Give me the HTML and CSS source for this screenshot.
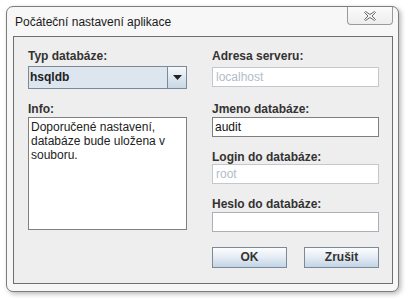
FILE: index.html
```html
<!DOCTYPE html>
<html>
<head>
<meta charset="utf-8">
<link rel="stylesheet" href="styles.css">
</head>
<body>
<div class="window">
  <div class="titlebar">
    <span class="title">Počáteční nastavení aplikace</span>
    <span class="close">
      <svg width="12" height="10" viewBox="0 0 12 10"><path d="M0.5 1.5 L1.5 0.5 L6 3.5 L10.5 0.5 L11.5 1.5 L8 5 L11.5 8.5 L10.5 9.5 L6 6.5 L1.5 9.5 L0.5 8.5 L4 5 Z" fill="#f4f4f4" stroke="#6c6c6c" stroke-width="1" stroke-linejoin="round"/></svg>
    </span>
  </div>
  <div class="panel">
    <div class="col left">
      <div class="label">Typ databáze:</div>
      <div class="combo mt3">
        <span class="combo-value">hsqldb</span>
        <span class="combo-arrow"><svg width="9" height="5" viewBox="0 0 9 5"><path d="M0 0 H9 L4.5 5 Z" fill="#222"/></svg></span>
      </div>
      <div class="label mt13">Info:</div>
      <div class="textarea mt1">Doporučené nastavení,<br>databáze bude uložena v<br>souboru.</div>
    </div>
    <div class="col right">
      <div class="label">Adresa serveru:</div>
      <div class="field disabled mt4">localhost</div>
      <div class="label mt15">Jmeno databáze:</div>
      <div class="field mt1">audit</div>
      <div class="label mt13">Login do databáze:</div>
      <div class="field disabled">root</div>
      <div class="label mt13">Heslo do databáze:</div>
      <div class="field plain mt1"></div>
      <div class="buttons">
        <div class="btn">OK</div>
        <div class="btn">Zrušit</div>
      </div>
    </div>
  </div>
</div>
</body>
</html>
```

FILE: styles.css
```css
html, body {
  margin: 0;
  padding: 0;
  background: #ffffff;
}
body {
  font-family: "Liberation Sans", Arial, sans-serif;
  font-size: 12px;
  width: 408px;
  height: 299px;
  overflow: hidden;
}
.window {
  margin: 6px 0 0 6px;
  width: 393px;
  height: 286px;
  box-sizing: border-box;
  border: 1px solid #7c7c7c;
  border-radius: 7px;
  background: #f7f7f7;
  box-shadow: 2px 2px 5px rgba(0, 0, 0, 0.28);
  padding: 0 5px 7px 6px;
  display: flex;
  flex-direction: column;
}
.titlebar {
  height: 29px;
  display: flex;
  justify-content: space-between;
  align-items: flex-start;
}
.title {
  margin: 8px 0 0 2px;
  line-height: 14px;
  color: #1a1a1a;
}
.close {
  width: 46px;
  height: 18px;
  box-sizing: border-box;
  border: 1px solid #9a9a9a;
  border-top: none;
  border-radius: 0 0 4px 4px;
  background: linear-gradient(#fbfbfb, #ededed);
  display: flex;
  align-items: center;
  justify-content: center;
  padding-top: 1px;
}
.close svg { display: block; }
.panel {
  flex: 1;
  border: 1px solid #6e6e6e;
  background: #eeeeee;
  display: grid;
  grid-template-columns: 159px 167px;
  column-gap: 25px;
  padding: 12px 0 0 14px;
  align-content: start;
}
.col {
  display: flex;
  flex-direction: column;
}
.label {
  font-weight: bold;
  line-height: 14px;
  height: 14px;
  color: #333333;
}
.mt1 { margin-top: 1px; }
.mt3 { margin-top: 3px; }
.mt4 { margin-top: 4px; }
.mt13 { margin-top: 13px; }
.mt15 { margin-top: 15px; }
.combo {
  height: 23px;
  box-sizing: border-box;
  border: 1px solid #7a8a99;
  background: #dde6ef;
  display: flex;
}
.combo-value {
  flex: 1;
  font-weight: bold;
  color: #222;
  line-height: 21px;
  padding-left: 1px;
}
.combo-arrow {
  width: 18px;
  border-left: 1px solid #7a8a99;
  background: linear-gradient(#f6f8fb, #dbe5ef 55%, #c9d7e6);
  display: flex;
  align-items: center;
  justify-content: center;
}
.combo-arrow svg { display: block; }
.textarea {
  height: 113px;
  box-sizing: border-box;
  border: 1px solid #808080;
  background: #ffffff;
  padding: 2px 2px;
  line-height: 14px;
  color: #222;
}
.field {
  height: 20px;
  box-sizing: border-box;
  border: 1px solid #7f7f7f;
  background: #ffffff;
  line-height: 18px;
  padding-left: 2px;
  color: #111;
}
.field.disabled {
  border-color: #c3c8ce;
  color: #b3bcc7;
  padding-left: 3px;
}
.field.plain {
  border-color: #a9b0b8;
}
.buttons {
  margin-top: 15px;
  display: flex;
  justify-content: space-between;
}
.btn {
  width: 75px;
  height: 21px;
  box-sizing: border-box;
  border: 1px solid #7a8a99;
  background: linear-gradient(#fdfdfe, #e6edf4 45%, #c3d4e5);
  text-align: center;
  font-weight: bold;
  line-height: 19px;
  color: #333;
}
```
